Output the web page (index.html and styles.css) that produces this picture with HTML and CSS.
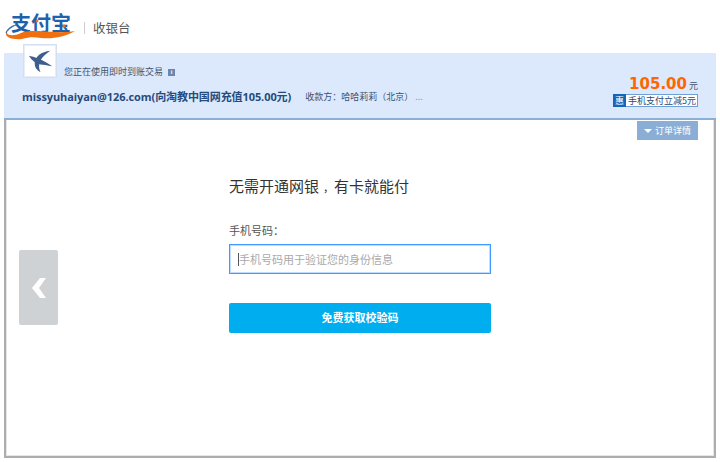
FILE: index.html
```html
<!DOCTYPE html>
<html lang="zh-CN">
<head>
<meta charset="utf-8">
<title>收银台</title>
<link rel="stylesheet" href="styles.css">
</head>
<body>
<header class="top">
  <div class="logo">
    <span class="logo-text">支付宝</span>
    <svg class="logo-swoosh" width="72" height="18" viewBox="0 0 72 18">
      <path d="M10 4C4 6 0 9 1 12c1 3 8 3 14 0 5-2 10-2 18-2 13 1 26 2 36 0-10 6-22 8-34 7-7-1-12-1-19 1C6 19-1 16 0 12 1 8 5 5 10 4z" fill="#f0700f"/>
      <path d="M10 4C5 5 1 8 0 12c1-2 5-6 10-8z" fill="#1a5ea8" stroke="#1a5ea8" stroke-width=".6"/>
      <circle cx="58" cy="5" r="1.6" fill="#f0700f"/>
      <circle cx="31" cy="0" r="1.4" fill="#f0700f"/>
    </svg>
  </div>
  <span class="top-sep"></span>
  <span class="top-title">收银台</span>
</header>
<section class="order">
  <div class="avatar">
    <svg width="32" height="32" viewBox="0 0 33 33">
      <path d="M27 6C18 7 11 12 11 19c0 4 2 7 6 9-2-4-2-8 0-12 2-4 6-7 10-10z" fill="#3e5f8e"/>
      <path d="M5 11c5 1 15 4 24 11-5-1-9-2-12-2-5-1-9-4-12-9z" fill="#3e5f8e"/>
    </svg>
  </div>
  <div class="order-main">
    <p class="trade">您正在使用即时到账交易<span class="trade-info">i</span></p>
    <p class="order-line"><strong class="subject">missyuhaiyan@126.com(向淘教中国网充值105.00元)</strong><span class="payee">收款方：哈哈莉莉（北京）<em class="more">...</em></span></p>
  </div>
  <div class="order-side">
    <p class="amount"><strong class="amount-num">105.00</strong> 元</p>
    <p class="promo"><span class="promo-tag">惠</span><span class="promo-text">手机支付立减5元</span></p>
  </div>
</section>
<main class="panel">
  <a class="detail-tab"><span class="caret"></span>订单详情</a>
  <a class="back">
    <svg width="16" height="22" viewBox="0 0 16 22"><path d="M9 1h6l-7 10 7 10H9L1 11z" fill="#fff"/></svg>
  </a>
  <form class="form">
    <h1 class="form-title">无需开通网银<span class="comma">，</span>有卡就能付</h1>
    <label class="form-label">手机号码：</label>
    <div class="form-input"><span class="cursor"></span><span class="placeholder">手机号码用于验证您的身份信息</span></div>
    <div class="form-btn">免费获取校验码</div>
  </form>
</main>
</body>
</html>
```
FILE: styles.css
```css
* { box-sizing: border-box; }
html, body { margin: 0; padding: 0; }
body {
  width: 720px;
  height: 463px;
  overflow: hidden;
  background: #fff;
  font-family: "Liberation Sans", "Noto Sans CJK SC", sans-serif;
  color: #333;
}
p, h1 { margin: 0; font-weight: normal; }
.top {
  height: 53px;
  display: flex;
  align-items: center;
  padding: 0 0 0 6px;
}
.logo { position: relative; width: 70px; height: 24px; }
.logo-text {
  position: absolute;
  left: 5px;
  top: -4px;
  font: bold 20px/24px "Noto Sans CJK SC", sans-serif;
  color: #1c62ad;
  white-space: nowrap;
}
.logo-swoosh { position: absolute; left: 0; top: 6px; overflow: visible; }
.top-sep { width: 1px; height: 12px; background: #ccc; margin: 2px 8px 0; }
.top-title { font: 12.5px/16px "Noto Sans CJK SC", sans-serif; color: #555; margin-top: 3px; }

.order {
  position: relative;
  margin: 0 4px;
  height: 67px;
  background: #dce9fd;
  display: flex;
  justify-content: space-between;
  padding: 0 18px;
  border-bottom: 2px solid #8aaed5;
}
.avatar {
  position: absolute;
  left: 19px;
  top: -9px;
  width: 34px;
  height: 34px;
  background: #fff;
  border: 1px solid #d5dff0;
  box-shadow: inset 0 0 0 1px #e8eef8;
  display: flex;
  align-items: center;
  justify-content: center;
}
.order-main { padding-top: 13px; }
.trade {
  margin-left: 42px;
  font: 9px/12px "Noto Sans CJK SC", sans-serif;
  color: #44546a;
  display: flex;
  align-items: center;
}
.trade-info {
  width: 7px;
  height: 7px;
  margin-left: 5px;
  background: #6c86ae;
  color: #fff;
  font: bold 6px/7px "Liberation Sans", sans-serif;
  text-align: center;
}
.order-line { margin-top: 11px; display: flex; align-items: center; white-space: nowrap; }
.subject {
  font: bold 11px/16px "Open Sans", "Noto Sans CJK SC", sans-serif;
  color: #264b7c;
  letter-spacing: -0.08px;
}
.payee {
  margin-left: 14px;
  font: 9px/12px "Noto Sans CJK TC", sans-serif;
  color: #3c506e;
}
.more { font-style: normal; color: #8a9ab0; margin-left: 2px; }
.order-side {
  display: flex;
  flex-direction: column;
  align-items: flex-end;
  padding-top: 23px;
}
.amount {
  font: 9px/17px "Noto Sans CJK SC", sans-serif;
  color: #44546a;
}
.amount-num {
  font: bold 15px/17px "DejaVu Sans", sans-serif;
  color: #ff6600;
}
.promo { display: flex; height: 13px; }
.promo-tag {
  width: 13px;
  background: #1565b8;
  color: #fff;
  font: 9px/13px "Noto Sans CJK SC", sans-serif;
  text-align: center;
}
.promo-text {
  background: #fff;
  border: 1px solid #6f9fd6;
  border-left: 0;
  padding: 0 1px 0 2px;
  color: #2a4a75;
  font: 9px/11px "Noto Sans CJK SC", sans-serif;
}

.panel {
  position: relative;
  margin: 0 4px;
  height: 338px;
  border: 2px solid #adadad;
  border-top: 0;
  box-shadow: inset 0 -1px 0 #e6e6e6, inset 1px 0 0 #e6e6e6, inset -1px 0 0 #e6e6e6;
  display: flex;
  justify-content: center;
}
.detail-tab {
  position: absolute;
  top: 1px;
  right: 16px;
  width: 61px;
  height: 19px;
  background: #8aaed5;
  color: #fff;
  font: 9px/19px "Noto Sans CJK SC", sans-serif;
  display: flex;
  align-items: center;
  justify-content: center;
}
.caret {
  width: 0;
  height: 0;
  border: 4px solid transparent;
  border-top: 4px solid #fff;
  border-bottom: 0;
  margin-right: 3px;
}
.back {
  position: absolute;
  left: 13px;
  top: 130px;
  width: 39px;
  height: 75px;
  background: #ced2d5;
  border-radius: 2px;
  display: flex;
  align-items: center;
  justify-content: center;
}
.form {
  width: 262px;
  padding-top: 56px;
}
.form-title {
  height: 20px;
  font: 15px/20px "Noto Sans CJK SC", sans-serif;
  color: #333;
}
.comma { font-size: 11px; line-height: 1; padding-left: 4px; }
.form-label {
  display: block;
  margin-top: 26px;
  font: 11px/16px "Noto Sans CJK SC", sans-serif;
  color: #555;
}
.form-input {
  margin-top: 6px;
  height: 30px;
  border: 1px solid #3f9bff;
  box-shadow: inset 0 0 0 1px rgba(63, 155, 255, .35);
  padding-left: 8px;
  display: flex;
  align-items: center;
}
.cursor { width: 1px; height: 13px; background: #555; }
.placeholder { font: 11px/16px "Noto Sans CJK SC", sans-serif; color: #a9a9a9; }
.form-btn {
  margin-top: 29px;
  height: 30px;
  border-radius: 2px;
  background: #00aeef;
  color: #fff;
  font: bold 11px/29px "Noto Sans CJK SC", sans-serif;
  text-align: center;
}
```
